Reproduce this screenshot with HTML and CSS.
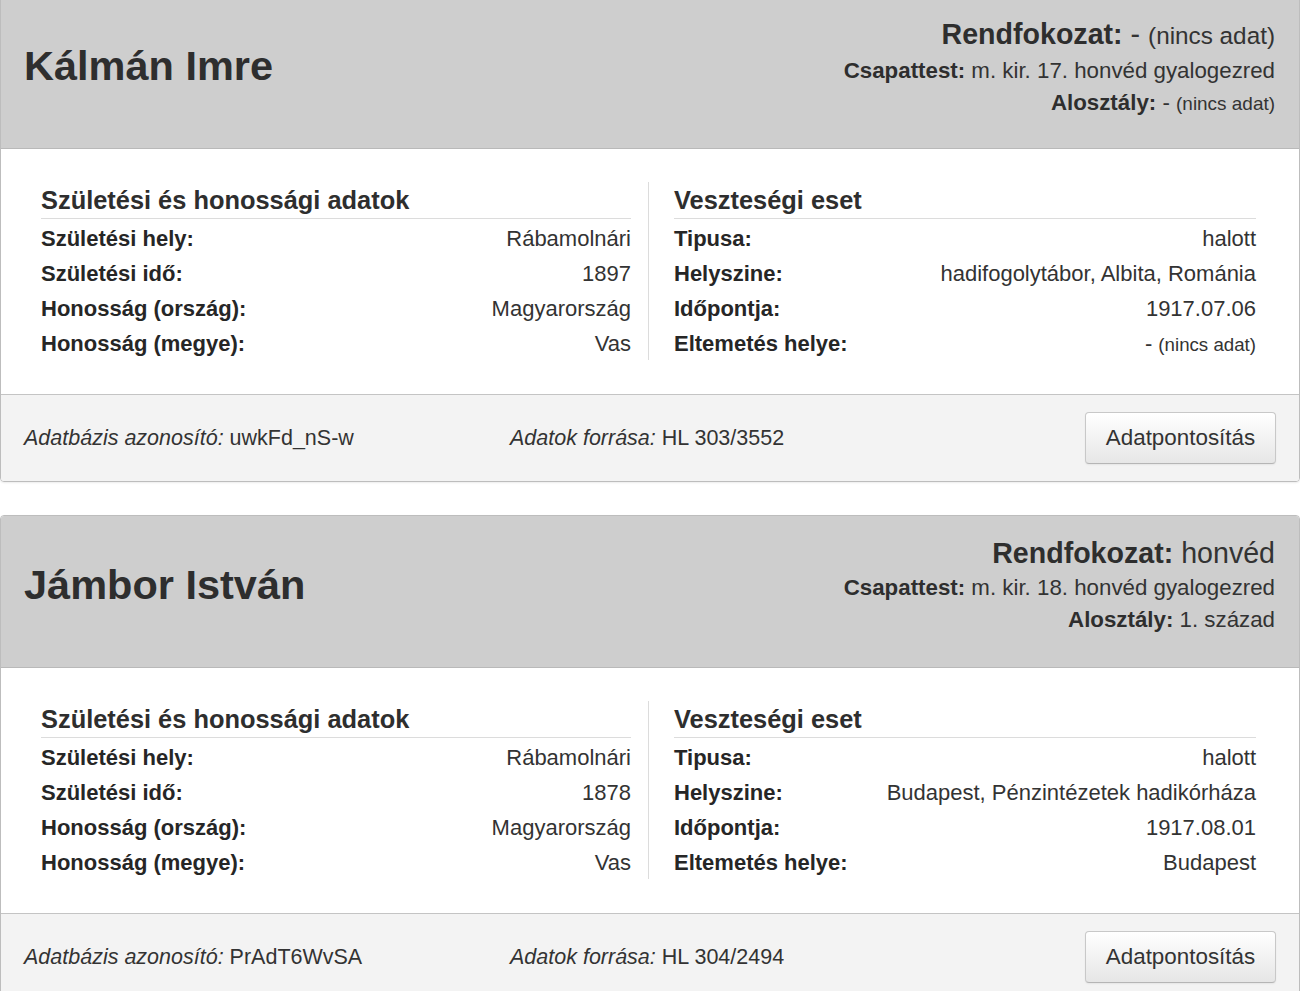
FILE: index.html
```html
<!DOCTYPE html>
<html lang="hu">
<head>
<meta charset="utf-8">
<title>Veszteséglista</title>
<link rel="stylesheet" href="styles.css">
</head>
<body>
<div class="list">
  <article class="card">
    <header class="card-head">
      <h2 class="name">Kálmán Imre</h2>
      <div class="meta">
        <div class="meta-rank"><b>Rendfokozat:</b> - <small>(nincs adat)</small></div>
        <div class="meta-line"><b>Csapattest:</b> m. kir. 17. honvéd gyalogezred</div>
        <div class="meta-line meta-last"><b>Alosztály:</b> - <small>(nincs adat)</small></div>
      </div>
    </header>
    <div class="card-body">
      <section class="col col-left">
        <h3 class="col-title">Születési és honossági adatok</h3>
        <div class="row"><span class="label">Születési hely:</span><span class="value">Rábamolnári</span></div>
        <div class="row"><span class="label">Születési idő:</span><span class="value">1897</span></div>
        <div class="row"><span class="label">Honosság (ország):</span><span class="value">Magyarország</span></div>
        <div class="row"><span class="label">Honosság (megye):</span><span class="value">Vas</span></div>
      </section>
      <div class="divider"></div>
      <section class="col col-right">
        <h3 class="col-title">Veszteségi eset</h3>
        <div class="row"><span class="label">Tipusa:</span><span class="value">halott</span></div>
        <div class="row"><span class="label">Helyszine:</span><span class="value">hadifogolytábor, Albita, Románia</span></div>
        <div class="row"><span class="label">Időpontja:</span><span class="value">1917.07.06</span></div>
        <div class="row"><span class="label">Eltemetés helye:</span><span class="value">- <small>(nincs adat)</small></span></div>
      </section>
    </div>
    <footer class="card-foot">
      <div class="foot-item foot-id"><em>Adatbázis azonosító:</em> uwkFd_nS-w</div>
      <div class="foot-item foot-src"><em>Adatok forrása:</em> HL 303/3552</div>
      <button class="btn" type="button">Adatpontosítás</button>
    </footer>
  </article>

  <article class="card">
    <header class="card-head">
      <h2 class="name">Jámbor István</h2>
      <div class="meta">
        <div class="meta-rank"><b>Rendfokozat:</b> honvéd</div>
        <div class="meta-line"><b>Csapattest:</b> m. kir. 18. honvéd gyalogezred</div>
        <div class="meta-line meta-last"><b>Alosztály:</b> 1. század</div>
      </div>
    </header>
    <div class="card-body">
      <section class="col col-left">
        <h3 class="col-title">Születési és honossági adatok</h3>
        <div class="row"><span class="label">Születési hely:</span><span class="value">Rábamolnári</span></div>
        <div class="row"><span class="label">Születési idő:</span><span class="value">1878</span></div>
        <div class="row"><span class="label">Honosság (ország):</span><span class="value">Magyarország</span></div>
        <div class="row"><span class="label">Honosság (megye):</span><span class="value">Vas</span></div>
      </section>
      <div class="divider"></div>
      <section class="col col-right">
        <h3 class="col-title">Veszteségi eset</h3>
        <div class="row"><span class="label">Tipusa:</span><span class="value">halott</span></div>
        <div class="row"><span class="label">Helyszine:</span><span class="value">Budapest, Pénzintézetek hadikórháza</span></div>
        <div class="row"><span class="label">Időpontja:</span><span class="value">1917.08.01</span></div>
        <div class="row"><span class="label">Eltemetés helye:</span><span class="value">Budapest</span></div>
      </section>
    </div>
    <footer class="card-foot">
      <div class="foot-item foot-id"><em>Adatbázis azonosító:</em> PrAdT6WvSA</div>
      <div class="foot-item foot-src"><em>Adatok forrása:</em> HL 304/2494</div>
      <button class="btn" type="button">Adatpontosítás</button>
    </footer>
  </article>
</div>
</body>
</html>
```

FILE: styles.css
```css
* { box-sizing: border-box; }

html, body {
  margin: 0;
  padding: 0;
  background: #ffffff;
}

body {
  font-family: "Liberation Sans", Arial, Helvetica, sans-serif;
  color: #333333;
}

.list {
  margin-top: -4px;
}

.card {
  border: 1px solid #bdbdbd;
  border-radius: 4px;
  margin-bottom: 33px;
  overflow: hidden;
  box-shadow: 0 1px 2px rgba(0, 0, 0, 0.08);
}

.card-head {
  display: flex;
  justify-content: space-between;
  align-items: flex-start;
  background: #cecece;
  border-bottom: 1px solid #b9b9b9;
  padding: 19px 24px 31px 23px;
  height: 152px;
}

.name {
  margin: 26px 0 0 0;
  font-size: 41.5px;
  line-height: 48px;
  font-weight: bold;
  color: #2e2e2e;
}

.meta {
  text-align: right;
}

.meta-rank {
  font-size: 28.6px;
  line-height: 36px;
}

.meta-line {
  font-size: 22.3px;
  line-height: 33px;
}

.meta-last {
  line-height: 32px;
}

.meta b {
  font-weight: bold;
  color: #2e2e2e;
}

small {
  font-size: 85%;
}

.card-body {
  display: flex;
  padding: 33px 43px 32px 40px;
  background: #ffffff;
  height: 245px;
}

.col-left {
  flex: 590 1 0;
}

.col-right {
  flex: 582 1 0;
}

.divider {
  width: 1px;
  background: #dcdcdc;
  margin: 0 25px 0 17px;
  height: 178px;
}

.col-title {
  margin: 0 0 2px 0;
  font-size: 25.4px;
  line-height: 36px;
  font-weight: bold;
  color: #2e2e2e;
  border-bottom: 1px solid #dcdcdc;
}

.row {
  display: flex;
  justify-content: space-between;
  align-items: baseline;
  height: 35px;
  line-height: 35px;
  font-size: 22px;
}

.label {
  font-weight: bold;
  color: #262626;
}

.value {
  color: #333333;
  text-align: right;
}

.card-foot {
  display: flex;
  align-items: center;
  background: #f3f3f3;
  border-top: 1px solid #c4c4c4;
  padding: 17px 23px 17px 23px;
  height: 87px;
  font-size: 21.5px;
}

.foot-item {
  white-space: nowrap;
}

.foot-id {
  width: 486px;
}

.foot-src {
  flex: 1;
}

.foot-item em {
  font-style: italic;
}

.btn {
  font-family: "Liberation Sans", Arial, Helvetica, sans-serif;
  font-size: 22.4px;
  color: #333333;
  height: 52px;
  width: 191px;
  padding: 0;
  background: linear-gradient(#ffffff, #e6e6e6);
  border: 1px solid #c8c8c8;
  border-bottom-color: #b5b5b5;
  border-radius: 4px;
  box-shadow: inset 0 1px 0 rgba(255, 255, 255, 0.3), 0 1px 2px rgba(0, 0, 0, 0.06);
}
```
